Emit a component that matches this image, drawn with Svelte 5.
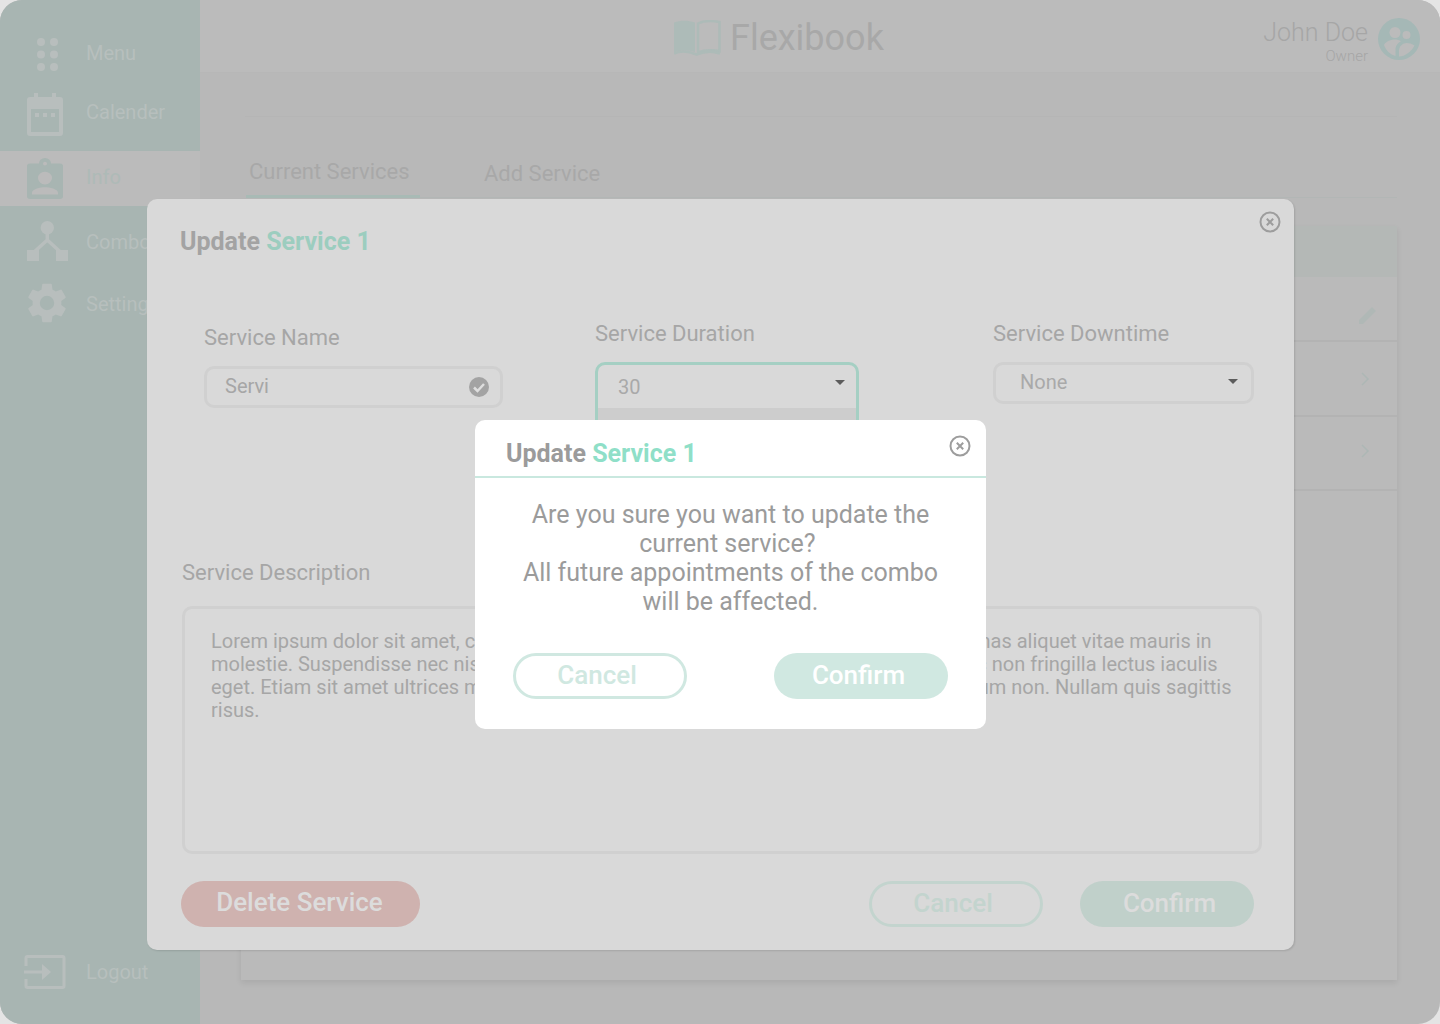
<script lang="ts">
  // Sidebar items above the logout link
  const navItems = [
    { label: 'Menu', icon: 'menu' },
    { label: 'Calender', icon: 'calendar' },
    { label: 'Info', icon: 'info', active: true },
    { label: 'Combo', icon: 'combo' },
    { label: 'Settings', icon: 'settings' }
  ];

  const description = [
    'Lorem ipsum dolor sit amet, consectetur adipiscing elit. Praesent vel tortor sed. Maecenas aliquet vitae mauris in',
    'molestie. Suspendisse nec nisl sit amet ante dictum rhoncus, sed ornare purus vel nunc non fringilla lectus iaculis',
    'eget. Etiam sit amet ultrices metus, vel dictum lorem at nunc at ante blandit ipsum dictum non. Nullam quis sagittis',
    'risus.'
  ];
</script>

<div class="app">
  <aside class="sidebar">
    {#each navItems as item}
      <div class="nav-item {item.icon}" class:active={item.active}>
        <span class="nav-icon">
          {#if item.icon === 'menu'}
            <svg width="40" height="40" viewBox="0 0 40 40">
              <circle cx="14" cy="9" r="4" /><circle cx="27" cy="9" r="4" />
              <circle cx="14" cy="21.500" r="4" /><circle cx="27" cy="21.500" r="4" />
              <circle cx="14" cy="34" r="4" /><circle cx="27" cy="34" r="4" />
            </svg>
          {:else if item.icon === 'calendar'}
            <svg width="40" height="44" viewBox="0 0 40 44">
              <path d="M9 1h4v4h14V1h4v4h4a3 3 0 0 1 3 3v33a3 3 0 0 1-3 3H5a3 3 0 0 1-3-3V8a3 3 0 0 1 3-3h4zM6 17v23h28V17z" fill-rule="evenodd" />
              <rect x="10" y="21" width="4" height="4" /><rect x="18" y="21" width="4" height="4" /><rect x="26" y="21" width="4" height="4" />
            </svg>
          {:else if item.icon === 'info'}
            <svg width="40" height="41" viewBox="0 -2 40 45" preserveAspectRatio="none">
              <path d="M5 4h9a6 6 0 0 1 12 0h9a3 3 0 0 1 3 3v33a3 3 0 0 1-3 3H5a3 3 0 0 1-3-3V7a3 3 0 0 1 3-3zM20 2.200a2 2 0 1 0 0 4 2 2 0 0 0 0-4zM20 13a7 7 0 1 0 0 14 7 7 0 0 0 0-14zM7 38h26v-2c0-4-8.500-6-13-6s-13 2-13 6z" fill-rule="evenodd" />
            </svg>
          {:else if item.icon === 'combo'}
            <svg width="44" height="44" viewBox="0 0 44 44">
              <circle cx="22.300" cy="7.700" r="6.700" />
              <path d="M22.300 12v9M22.300 20L8 33M22.300 20L36.500 33" fill="none" stroke-width="3.500" />
              <rect x="2" y="30" width="12" height="11" /><rect x="31" y="30" width="12" height="11" />
            </svg>
          {:else if item.icon === 'settings'}
            <svg width="48" height="48" viewBox="0 0 24 24">
              <path d="M19.140 12.940a7.300 7.300 0 0 0 0-1.880l2.030-1.580a.5.5 0 0 0 .12-.61l-1.920-3.320a.5.5 0 0 0-.59-.22l-2.390.96a7 7 0 0 0-1.620-.94l-.36-2.540a.5.500 0 0 0-.5-.41h-3.840a.5.500 0 0 0-.48.410l-.36 2.540a7.300 7.300 0 0 0-1.630.94l-2.390-.96a.5.500 0 0 0-.59.22L2.710 8.870a.5.500 0 0 0 .12.610l2.030 1.580a7.300 7.300 0 0 0 0 1.880l-2.030 1.580a.5.500 0 0 0-.12.610l1.920 3.320c.12.220.37.290.59.220l2.390-.96c.5.380 1.040.7 1.630.94l.36 2.540c.05.240.24.410.48.410h3.840c.24 0 .44-.17.47-.41l.36-2.540a7 7 0 0 0 1.630-.94l2.390.96c.22.080.47 0 .59-.22l1.920-3.320a.5.500 0 0 0-.12-.61zM12 15.600a3.600 3.600 0 1 1 0-7.200 3.600 3.600 0 0 1 0 7.200z" />
            </svg>
          {/if}
        </span>
        <span class="nav-label">{item.label}</span>
      </div>
    {/each}

    <div class="nav-item logout">
      <span class="nav-icon">
        <svg width="42" height="34" viewBox="0 0 42 34">
          <path d="M2 11V3a1.500 1.500 0 0 1 1.500-1.500h35A1.500 1.500 0 0 1 40 3v28a1.500 1.500 0 0 1-1.500 1.500h-35A1.500 1.500 0 0 1 2 31v-7" fill="none" stroke-width="3" />
          <path d="M0 15.500h18V9l9 8-9 8v-6.500H0z" />
        </svg>
      </span>
      <span class="nav-label">Logout</span>
    </div>
  </aside>

  <div class="content">
    <header class="topbar">
      <div class="brand">
        <svg width="47" height="36" viewBox="0 0 47 36">
          <path class="page-solid" d="M0 2.500c6.500-2.500 14-2.500 21 0V32c-7-2-14.500-2-21 .5z" />
          <path class="page-line" d="M24 3.500c6-3 13-3 21.500-1.500v29c-8.500-1.500-15.500-1-21.500 1.500z" />
          <path class="page-line" d="M0 33.500c7-3 14-2.500 22.500 1 8.500-3.500 15.500-4 23.500-1" />
        </svg>
        <span>Flexibook</span>
      </div>
      <div class="user">
        <div class="user-text">
          <div class="user-name">John Doe</div>
          <div class="user-role">Owner</div>
        </div>
        <svg width="42" height="42" viewBox="0 0 42 42">
          <circle cx="21" cy="21" r="21" class="avatar-bg" />
          <circle cx="17" cy="14.500" r="5.500" class="avatar-fg" />
          <circle cx="28.500" cy="17" r="4" class="avatar-fg" />
          <path d="M6 27c2-4 7.500-5.500 11-5.500 2 0 4.500.5 6 1.700-3 1.500-5 4-5.500 7V38C12 36.500 8 32.500 6 27z" class="avatar-fg" />
          <path d="M21 38.500v-6c0-4 4-7.500 7.500-7.500 2.500 0 5.500.8 8 2.500C33.500 33.500 27 38.500 21 38.500z" class="avatar-fg" />
        </svg>
      </div>
    </header>

    <div class="sub-rule"></div>

    <nav class="tabs">
      <span class="tab current">Current Services</span>
      <span class="tab">Add Service</span>
    </nav>

    <section class="table-card">
      <div class="table-head"></div>
      <div class="table-row first">
        <svg width="20" height="20" viewBox="0 0 20 20" class="row-edit"><path d="M1 19v-4L14 2l4 4L5 19z" /></svg>
      </div>
      <div class="table-row second">
        <svg width="10" height="16" viewBox="0 0 10 16" class="row-chevron"><path d="M2 2l6 6-6 6" /></svg>
      </div>
      <div class="table-row third">
        <svg width="10" height="16" viewBox="0 0 10 16" class="row-chevron"><path d="M2 2l6 6-6 6" /></svg>
      </div>
    </section>
  </div>

  <!-- Update service dialog -->
  <div class="modal update-modal">
    <h2 class="modal-title"><span>Update</span> <em>Service 1</em></h2>
    <svg class="close" width="22" height="22" viewBox="0 0 22 22">
      <circle cx="11" cy="11" r="9.500" />
      <path d="M7.800 7.800l6.400 6.400M14.200 7.800l-6.400 6.400" />
    </svg>

    <div class="fields">
      <div class="field name-field">
        <div class="field-label">Service Name</div>
        <div class="input">
          <span>Servi</span>
          <svg width="20" height="20" viewBox="0 0 20 20">
            <circle cx="10" cy="10" r="10" fill="#a3a3a3" />
            <path d="M5 10.500l3.500 3.500L15 7" fill="none" stroke="#dedede" stroke-width="2.500" />
          </svg>
        </div>
      </div>
      <div class="field duration-field">
        <div class="field-label">Service Duration</div>
        <div class="select open">
          <div class="select-value"><span>30</span><i class="caret"></i></div>
          <div class="select-list"></div>
        </div>
      </div>
      <div class="field downtime-field">
        <div class="field-label">Service Downtime</div>
        <div class="select">
          <div class="select-value"><span>None</span><i class="caret"></i></div>
        </div>
      </div>
    </div>

    <div class="field-label description-label">Service Description</div>
    <div class="textarea">
      {#each description as line}
        <div>{line}</div>
      {/each}
    </div>

    <div class="actions">
      <button class="btn danger">Delete Service</button>
      <button class="btn outline cancel-btn">Cancel</button>
      <button class="btn solid">Confirm</button>
    </div>
  </div>

  <!-- Confirmation dialog on top -->
  <div class="modal confirm-modal">
    <div class="confirm-head">
      <h2 class="modal-title"><span>Update</span> <em>Service 1</em></h2>
      <svg class="close" width="22" height="22" viewBox="0 0 22 22">
        <circle cx="11" cy="11" r="9.500" />
        <path d="M7.800 7.800l6.400 6.400M14.200 7.800l-6.400 6.400" />
      </svg>
    </div>
    <p class="confirm-text">
      Are you sure you want to update the<br />current service?&nbsp;<br />All future appointments of the combo<br />will be affected.
    </p>
    <div class="confirm-actions">
      <button class="btn outline">Cancel</button>
      <button class="btn solid">Confirm</button>
    </div>
  </div>
</div>

<style>
  :global(body) {
    margin: 0;
    background: #e4e4e4;
    font-family: Roboto, sans-serif;
  }
  .app {
    position: relative;
    display: flex;
    width: 1440px;
    height: 1024px;
    border-radius: 22px;
    overflow: hidden;
    background: #b8b8b8;
  }

  /* sidebar */
  .sidebar {
    width: 200px;
    flex: none;
    display: flex;
    flex-direction: column;
    padding-top: 24px;
    box-sizing: border-box;
    background: #a8b5b2;
  }
  .nav-item {
    display: flex;
    align-items: center;
    height: 60px;
    color: #b7bfbd;
    fill: #b8bebd;
    stroke: #b8bebd;
    font-size: 20px;
  }
  .nav-item svg { stroke: none; }
  .nav-item path[fill='none'] { stroke: #b8bebd; }
  .nav-icon {
    width: 86px;
    flex: none;
    display: flex;
    padding-left: 25px;
    box-sizing: border-box;
  }
  .nav-item.menu { height: 58px; }
  .nav-item.menu .nav-icon { padding-left: 27px; }
  .nav-item.calendar { height: 60px; margin-bottom: 9px; }
  .nav-item.calendar svg { margin-top: 3px; }
  .nav-item.info {
    height: 55px;
    background: #bbbbbb;
    color: #aebab7;
    fill: #a8b5b2;
  }
  .nav-item.info .nav-label { margin-top: -3px; }
  .nav-item.combo { margin-top: 6px; height: 60px; }
  .nav-item.settings { height: 62px; }
  .nav-item.settings .nav-label { margin-top: 1px; }
  .nav-item.settings .nav-icon { padding-left: 23px; }
  .nav-item.logout { margin-top: auto; margin-bottom: 22px; }
  .nav-item.logout .nav-icon { padding-left: 24px; }

  /* main area */
  .content {
    flex: 1;
    min-width: 0;
    display: flex;
    flex-direction: column;
  }
  .topbar {
    position: relative;
    height: 73px;
    flex: none;
    display: flex;
    align-items: center;
    justify-content: flex-end;
    padding-right: 20px;
    box-sizing: border-box;
    background: #bbbbbb;
    border-bottom: 1px solid #b7b7b7;
  }
  .brand {
    position: absolute;
    left: 474px;
    top: 14px;
    display: flex;
    align-items: center;
    gap: 9px;
    font-size: 36px;
    line-height: 48px;
    color: #a8a8a8;
  }
  .page-solid { fill: #adbbb8; }
  .page-line { fill: none; stroke: #adbbb8; stroke-width: 2.500; }
  .user {
    display: flex;
    align-items: center;
    gap: 10px;
    margin-top: 5px;
  }
  .user-text { text-align: right; padding-top: 6px; }
  .user-name { font-size: 25px; line-height: 28px; font-weight: 300; color: #a6a6a6; }
  .user-role { font-size: 15px; line-height: 18px; font-weight: 300; color: #a6a6a6; }
  .avatar-bg { fill: #a5b8b6; }
  .avatar-fg { fill: #bbbbbb; }

  .sub-rule {
    height: 1px;
    margin: 43px 43px 0 45px;
    background: #b5b5b5;
  }
  .tabs {
    display: flex;
    height: 81px;
    margin: 0 43px 0 46px;
    border-bottom: 1px solid #b2b6b5;
    box-sizing: border-box;
  }
  .tab {
    padding: 40px 0 0;
    font-size: 22px;
    line-height: 30px;
    color: #a8a8a8;
  }
  .tab:not(.current) { margin-left: 64px; padding-top: 42px; }
  .tab.current {
    width: 174px;
    padding-left: 3px;
    box-sizing: border-box;
    border-bottom: 3px solid #a8bab5;
    margin-bottom: -1px;
  }

  .table-card {
    flex: none;
    margin: 28px 43px 0 41px;
    height: 754px;
    background: #bababa;
    box-shadow: 0 3px 6px rgba(0, 0, 0, 0.08);
  }
  .table-head {
    height: 51px;
    background: #b4b8b6;
  }
  .table-row {
    position: relative;
    display: flex;
    justify-content: flex-end;
    align-items: center;
    padding-right: 20px;
    box-sizing: border-box;
    border-bottom: 2px solid #b3b3b3;
  }
  .table-row.first { height: 65px; }
  .table-row.second { height: 75px; }
  .table-row.third { height: 74px; }
  .row-edit { fill: #b0b8b6; margin-right: -1px; margin-top: 12px; }
  .row-chevron { fill: none; stroke: #adb7b5; stroke-width: 1.500; margin-right: 7px; }
  .third .row-chevron { margin-top: -4px; }

  /* dialogs */
  .modal {
    position: absolute;
    box-sizing: border-box;
    border-radius: 10px;
  }
  .update-modal {
    left: 147px;
    top: 199px;
    width: 1147px;
    height: 751px;
    background: #d9d9d9;
    box-shadow: 1px 1px 2px rgba(0, 0, 0, 0.12);
    padding: 27px 33px 0;
  }
  .modal-title {
    margin: 0;
    font-size: 25px;
    line-height: 32px;
    font-weight: 700;
  }
  .update-modal .modal-title span { color: #a3a3a3; }
  .update-modal .modal-title em { color: #9ccdbf; font-style: normal; }
  .confirm-modal .modal-title span { color: #9b9b9b; }
  .confirm-modal .modal-title em { color: #8fdfc8; font-style: normal; }
  .close {
    position: absolute;
    fill: none;
    stroke: #9d9d9d;
    stroke-width: 2;
  }
  .update-modal > .close { right: 13px; top: 12px; }

  .fields {
    position: relative;
    display: flex;
    margin-top: 63px;
  }
  .field-label {
    font-size: 22px;
    line-height: 26px;
    color: #a6a6a6;
  }
  .field { flex: none; }
  .name-field { width: 391px; margin-left: 24px; padding-top: 4px; }
  .duration-field { width: 398px; }
  .downtime-field { width: 261px; }
  .input {
    width: 299px;
    height: 42px;
    margin-top: 15px;
    box-sizing: border-box;
    border: 3px solid #d0d0d0;
    border-radius: 10px;
    display: flex;
    align-items: center;
    justify-content: space-between;
    padding: 0 11px 0 18px;
    font-size: 20px;
    color: #a6a6a6;
  }
  .input span { padding-bottom: 2px; }
  .select {
    height: 42px;
    margin-top: 15px;
    box-sizing: border-box;
    border: 3px solid #d0d0d0;
    border-radius: 10px;
    font-size: 20px;
    color: #a9a9a9;
  }
  .duration-field .select { width: 264px; }
  .select.open { height: 70px; border-color: #a5cfc3; }
  .select-value {
    position: relative;
    height: 36px;
    display: flex;
    align-items: center;
    padding-left: 24px;
    padding-bottom: 2px;
    box-sizing: border-box;
  }
  .select.open .select-value { height: 43px; padding-left: 20px; padding-bottom: 0; }
  .select-list { height: 24px; background: #cdcdcd; }
  .caret {
    position: absolute;
    right: 13px;
    top: 14px;
    border: 5px solid transparent;
    border-top: 5px solid #5c5c5c;
    border-bottom: 0;
  }
  .select.open .caret { top: 15px; right: 11px; }

  .description-label { margin-top: 128px; margin-left: 2px; }
  .textarea {
    width: 1080px;
    height: 248px;
    margin: 20px 0 0 2px;
    padding: 21px 26px 0;
    box-sizing: border-box;
    border: 3px solid #d0d0d0;
    border-radius: 10px;
    font-size: 20px;
    line-height: 23px;
    color: #a6a6a6;
    white-space: nowrap;
    overflow: hidden;
  }

  .actions {
    display: flex;
    margin: 27px 0 0 1px;
  }
  .btn {
    height: 46px;
    width: 174px;
    flex: none;
    padding: 0;
    box-sizing: border-box;
    border: none;
    border-radius: 23px;
    font-family: Roboto, sans-serif;
    font-size: 26px;
    font-weight: 500;
  }
  .actions .danger {
    width: 239px;
    margin-right: 449px;
    padding: 0 2px 4px 0;
    background: #cfb2af;
    color: #dcdcdc;
  }
  .actions .outline {
    border: 3px solid #c3d4ce;
    background: transparent;
    color: #c3d4ce;
    margin-right: 37px;
    padding: 0 6px 3px 0;
  }
  .actions .solid { background: #c0d0ca; color: #dcdcdc; padding: 0 0 3px 5px; }

  .confirm-modal {
    left: 475px;
    top: 420px;
    width: 511px;
    height: 309px;
    background: #ffffff;
  }
  .confirm-head {
    position: relative;
    height: 58px;
    padding: 18px 31px 0;
    box-sizing: border-box;
    border-bottom: 2px solid #c9e8df;
  }
  .confirm-head .close { right: 15px; top: 15px; }
  .confirm-text {
    margin: 22px 0 0;
    text-align: center;
    font-size: 25px;
    line-height: 29px;
    color: #9b9b9b;
  }
  .confirm-actions {
    display: flex;
    justify-content: space-between;
    margin: 37px 38px 0;
  }
  .confirm-actions .outline {
    border: 3px solid #d0e8e1;
    background: transparent;
    color: #d0e8e1;
    padding: 0 6px 3px 0;
  }
  .confirm-actions .solid { background: #d0e8e1; color: #ffffff; padding: 0 5px 3px 0; }
</style>
